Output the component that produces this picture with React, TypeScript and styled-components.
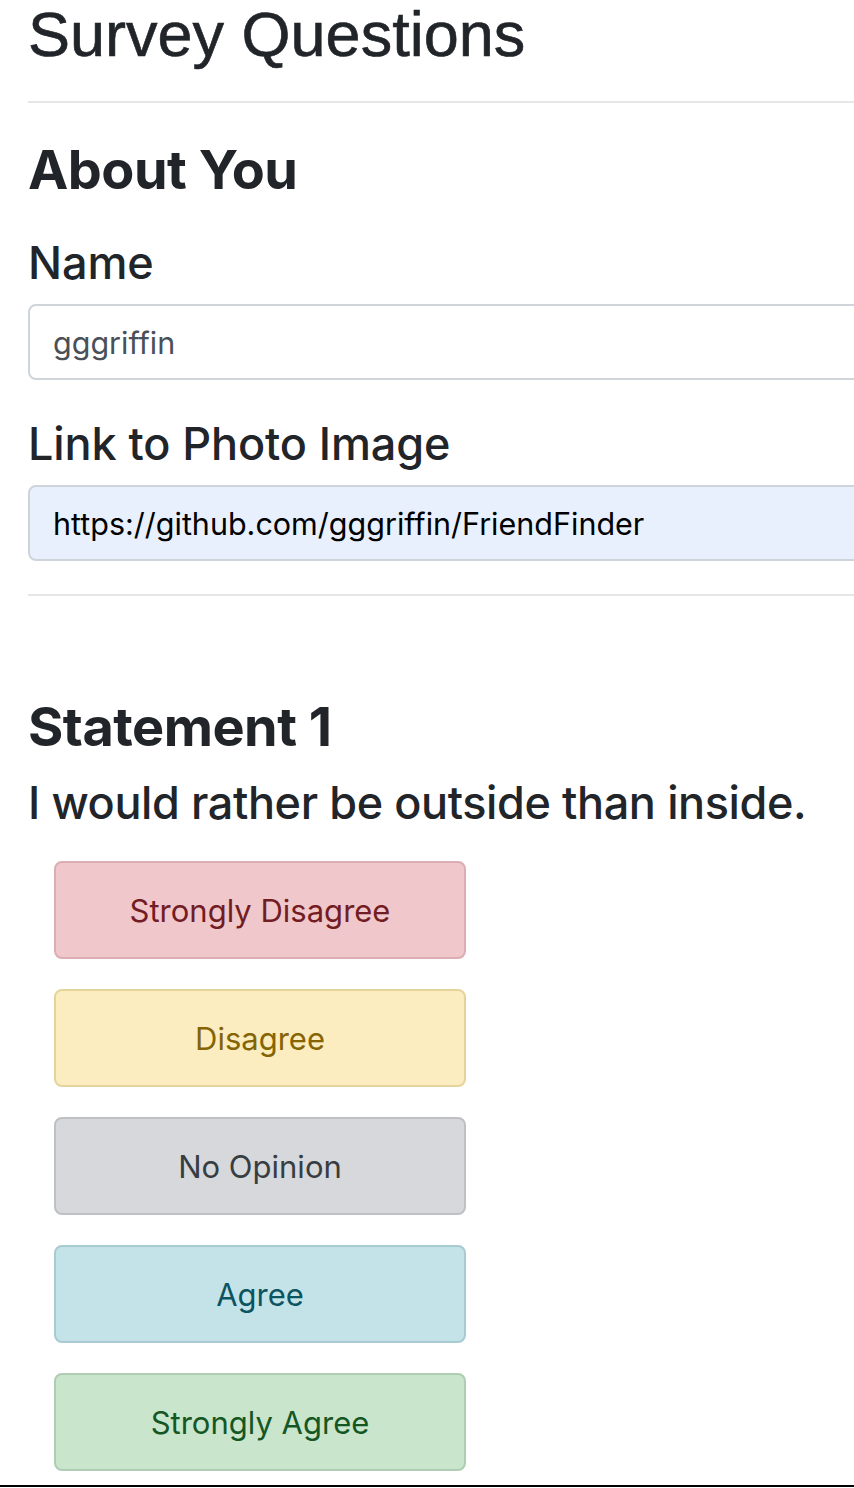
import React from "react";
import styled, { createGlobalStyle } from "styled-components";

const GlobalStyle = createGlobalStyle`
  html, body {
    margin: 0;
    padding: 0;
    background: #fff;
    overflow: hidden;
  }
  body {
    font-family: Inter, "Noto Sans", sans-serif;
    color: #212529;
  }
`;

const Page = styled.div`
  display: flex;
  flex-direction: column;
  width: 854px;
  overflow: hidden;
`;

const Container = styled.div`
  display: flex;
  flex-direction: column;
  width: 1100px;
  padding-left: 28px;
`;

const Title = styled.h1`
  margin: -2px 0 0 0;
  font-family: "Liberation Sans", Arial, sans-serif;
  font-size: 63px;
  font-weight: 400;
  line-height: 72px;
  -webkit-text-stroke: 0.6px #212529;
`;

const Rule = styled.hr<{ $gap: number }>`
  margin: ${(p) => p.$gap}px 0 0 0;
  border: 0;
  border-top: 2px solid #e6e6e6;
  height: 0;
`;

const SectionHeading = styled.h2<{ $gap: number }>`
  margin: ${(p) => p.$gap}px 0 0 0;
  font-size: 54px;
  font-weight: 700;
  line-height: 67px;
  letter-spacing: -0.5px;
`;

const Label = styled.label<{ $gap: number }>`
  display: block;
  margin: ${(p) => p.$gap}px 0 0 0;
  font-size: 45px;
  font-weight: 500;
  line-height: 54px;
  letter-spacing: -0.1px;
`;

const Input = styled.input<{ $filled?: boolean }>`
  box-sizing: border-box;
  margin-top: 14px;
  width: 100%;
  height: 76px;
  padding: 0 23px;
  border: 2px solid #ced4da;
  border-radius: 8px;
  background: ${(p) => (p.$filled ? "#e8f0fe" : "#fff")};
  color: ${(p) => (p.$filled ? "#000" : "#495057")};
  font-family: Inter, "Noto Sans", sans-serif;
  font-size: 30.5px;
  outline: none;
`;

const Statement = styled.p`
  margin: 14px 0 0 0;
  font-size: 45px;
  font-weight: 500;
  line-height: 58px;
  letter-spacing: -0.4px;
`;

const Choices = styled.div`
  display: flex;
  flex-direction: column;
  gap: 30px;
  margin: 29px 0 0 26px;
`;

const tones = {
  danger: { bg: "#f0c7cb", border: "#dcadb2", fg: "#721c24" },
  warning: { bg: "#fcedc0", border: "#e4d49c", fg: "#856404" },
  secondary: { bg: "#d6d8dc", border: "#bec0c4", fg: "#383d41" },
  info: { bg: "#c4e3e8", border: "#a8cbd1", fg: "#0c5460" },
  success: { bg: "#c9e5cc", border: "#afcdb3", fg: "#155724" },
};

type Tone = keyof typeof tones;

const Choice = styled.button<{ $tone: Tone }>`
  box-sizing: border-box;
  width: 412px;
  height: 98px;
  border: 2px solid ${(p) => tones[p.$tone].border};
  border-radius: 8px;
  background: ${(p) => tones[p.$tone].bg};
  color: ${(p) => tones[p.$tone].fg};
  font-family: Inter, "Noto Sans", sans-serif;
  font-size: 31px;
  font-weight: 400;
  cursor: pointer;
`;

const BottomBar = styled.div`
  margin-top: 14px;
  height: 2px;
  background: #000;
`;

const choices: { label: string; tone: Tone }[] = [
  { label: "Strongly Disagree", tone: "danger" },
  { label: "Disagree", tone: "warning" },
  { label: "No Opinion", tone: "secondary" },
  { label: "Agree", tone: "info" },
  { label: "Strongly Agree", tone: "success" },
];

const App: React.FC = () => {
  return (
    <>
      <GlobalStyle />
      <Page>
        <Container>
          <Title>Survey Questions</Title>
          <Rule $gap={31} />

          <SectionHeading $gap={33}>About You</SectionHeading>
          <Label $gap={33}>Name</Label>
          <Input defaultValue={"gggriffin"} />
          <Label $gap={37}>Link to Photo Image</Label>
          <Input $filled defaultValue={"https://github.com/gggriffin/FriendFinder"} />
          <Rule $gap={33} />

          <SectionHeading $gap={97}>Statement 1</SectionHeading>
          <Statement>I would rather be outside than inside.</Statement>

          <Choices>
            {choices.map((c) => (
              <Choice key={c.label} $tone={c.tone}>
                {c.label}
              </Choice>
            ))}
          </Choices>
        </Container>
        <BottomBar />
      </Page>
    </>
  );
};

export default App;
